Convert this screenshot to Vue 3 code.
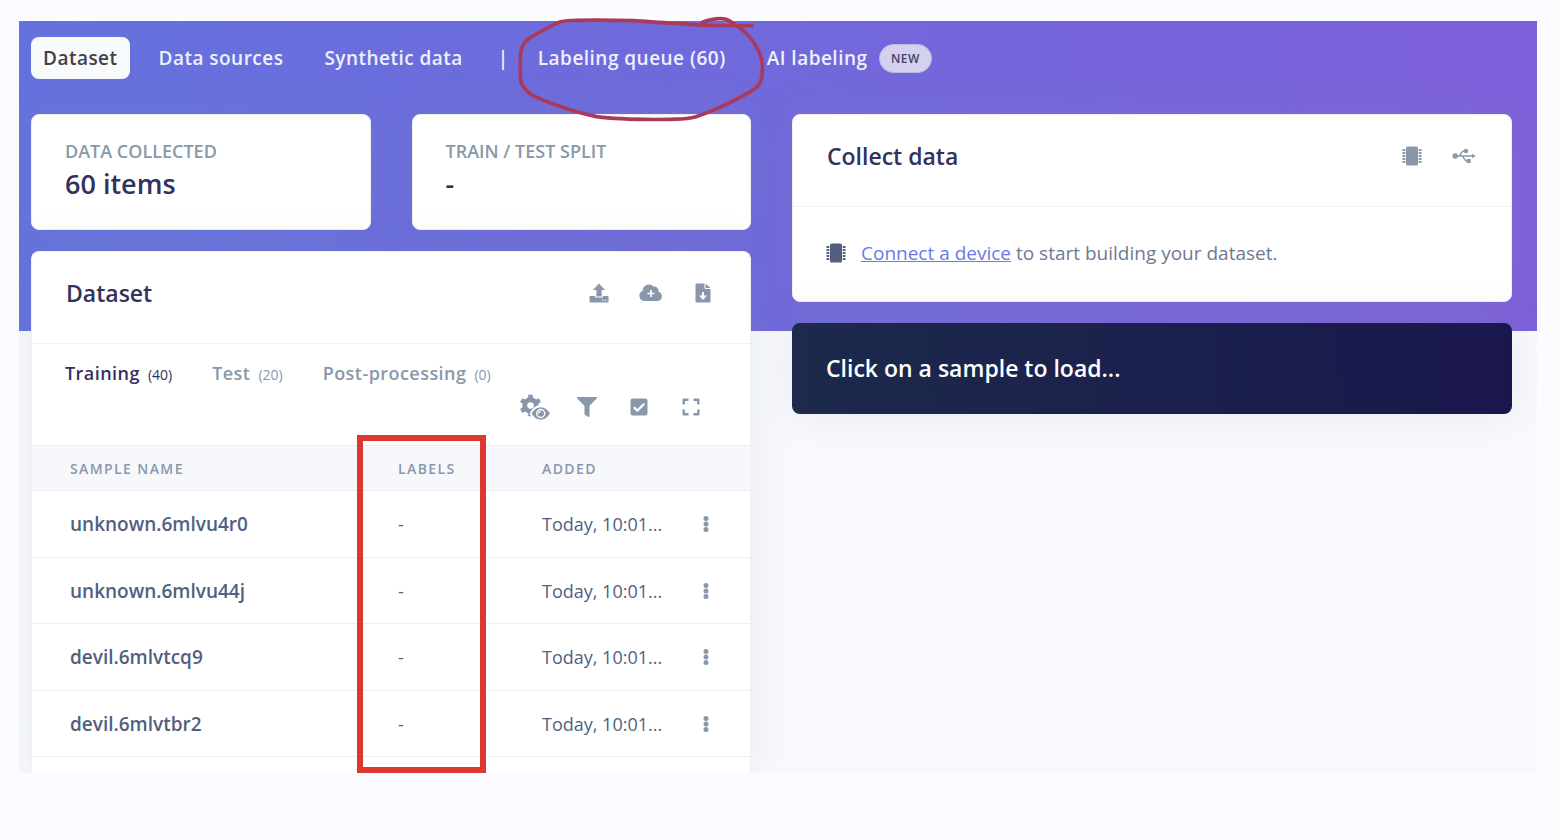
<script setup>
const samples = [
  { name: 'unknown.6mlvu4r0', label: '-', added: 'Today, 10:01...' },
  { name: 'unknown.6mlvu44j', label: '-', added: 'Today, 10:01...' },
  { name: 'devil.6mlvtcq9', label: '-', added: 'Today, 10:01...' },
  { name: 'devil.6mlvtbr2', label: '-', added: 'Today, 10:01...' }
]
const splits = [
  { name: 'Training', count: 40, active: true },
  { name: 'Test', count: 20, active: false },
  { name: 'Post-processing', count: 0, active: false }
]
const pins = [4, 7, 10, 13, 16]
</script>

<template>
  <div class="page">
    <main class="frame">
      <nav class="nav">
        <a href="#" class="nav-link current">Dataset</a>
        <a href="#" class="nav-link">Data sources</a>
        <a href="#" class="nav-link">Synthetic data</a>
        <span class="separator">|</span>
        <div class="marked">
          <a href="#" class="nav-link">Labeling queue (60)</a>
          <svg class="scribble" viewBox="45 45 750 330" fill="none" stroke="#aa3a5c" stroke-width="11" stroke-linecap="round" stroke-linejoin="round" aria-hidden="true">
            <path d="M607 67C635 57 662 54 678 58C690 62 697 69 706 75C742 95 762 125 776 153C789 183 788 202 787 222C785 247 774 260 762 268C722 293 650 330 588 350C560 358 540 357 512 358C450 359 350 358 290 350C230 338 140 308 100 287C72 272 60 248 61 230V172C62 143 70 128 84 118C110 99 150 80 176 67C190 61 205 62 230 61C290 60 360 61 400 62C460 66 520 71 570 73C620 77 680 78 757 77" />
          </svg>
        </div>
        <a href="#" class="nav-link">AI labeling <span class="badge">NEW</span></a>
      </nav>

      <div class="columns">
        <div class="column">
          <div class="stats">
            <section class="card stat">
              <h2 class="stat-label">DATA COLLECTED</h2>
              <p class="stat-value">60 items</p>
            </section>
            <section class="card stat">
              <h2 class="stat-label">TRAIN / TEST SPLIT</h2>
              <p class="stat-value">-</p>
            </section>
          </div>

          <section class="card dataset">
            <header class="card-header">
              <h2 class="card-title">Dataset</h2>
              <div class="actions">
                <button class="icon-button" aria-label="Upload data">
                  <svg width="20" height="20" viewBox="0 0 20 20" fill="currentColor">
                    <path d="M10 .5 16 7H12.6V13.5H7.4V7H4Z" />
                    <path fill-rule="evenodd" d="M1.2 13H6.2V14.5H13.8V13H18.8Q19.5 13 19.5 13.8V18.7Q19.5 19.5 18.8 19.5H1.2Q.5 19.5.5 18.7V13.8Q.5 13 1.2 13ZM13.2 16.7H14.5V17.8H13.2ZM16 16.7H17.3V17.8H16Z" />
                  </svg>
                </button>
                <button class="icon-button" aria-label="Import from cloud">
                  <svg width="24" height="20" viewBox="0 0 24 20">
                    <path fill="currentColor" d="M5.6 18A5.2 5.2 0 0 1 3.6 8A6.3 6.3 0 0 1 14.7 3.7A4 4 0 0 1 19.3 8.8A4.7 4.7 0 0 1 18.8 18Z" />
                    <path d="M12 7V14M8.5 10.5H15.500" stroke="#fff" stroke-width="1.7" />
                  </svg>
                </button>
                <button class="icon-button" aria-label="Export data">
                  <svg width="16" height="20" viewBox="0 0 16 20">
                    <path fill="currentColor" d="M1.500.5H9.500V5Q9.500 6 10.500 6H15.500V18.500Q15.500 19.500 14.500 19.500H1.500Q.5 19.500.5 18.500V1.500Q.5.5 1.500.5ZM10.600.5 15.500 5H10.600Z" />
                    <path fill="#fff" d="M7 9H9V12.500H12L8 17 4 12.500H7Z" />
                  </svg>
                </button>
              </div>
            </header>

            <div class="toolbar">
              <div class="splits">
                <button v-for="s in splits" :key="s.name" class="split" :class="{ active: s.active }">
                  {{ s.name }}<span class="count">({{ s.count }})</span>
                </button>
              </div>
              <div class="tools">
                <button class="icon-button" aria-label="Column visibility">
                  <svg width="30" height="28" viewBox="0 0 30 28">
                    <g fill="none" stroke="currentColor">
                      <circle cx="10.500" cy="12.500" r="5.800" stroke-width="5" />
                      <path d="M10.500 5V1.700M10.500 20V23.300M4 8.800 1.200 7.100M17 16.300 19.800 17.900M4 16.300 1.200 17.900M17 8.800 19.800 7.100" stroke-width="4.600" />
                    </g>
                    <path fill="#fff" d="M9.500 20.500Q14 12 20.500 12Q27 12 32 20.500Q27 29 20.500 29Q14 29 9.500 20.500Z" />
                    <path fill="currentColor" d="M11.500 20.500Q15.500 14.300 20.700 14.300Q26 14.300 30 20.500Q26 26.700 20.700 26.700Q15.500 26.700 11.500 20.500Z" />
                    <circle cx="20.700" cy="20.500" r="4" fill="none" stroke="#fff" stroke-width="1.400" />
                    <path d="M18.500 20.500A2.300 2.300 0 0 1 20.700 18.300" fill="none" stroke="#fff" stroke-width="1.300" />
                  </svg>
                </button>
                <button class="icon-button" aria-label="Filter samples">
                  <svg width="20" height="20" viewBox="0 0 512 512" fill="currentColor">
                    <path d="M487.976 0H24.028C2.710 0-8.047 25.866 7.058 40.971L192 225.941V432c0 7.831 3.821 15.170 10.237 19.662l80 55.980C298.020 518.690 320 507.493 320 487.980V225.941l184.947-184.970C520.021 25.896 509.338 0 487.976 0z" />
                  </svg>
                </button>
                <button class="icon-button" aria-label="Select multiple">
                  <svg width="18" height="18" viewBox="0 0 18 18">
                    <rect x=".5" y=".5" width="17" height="17" rx="2" fill="currentColor" />
                    <path d="M3.800 9.200 7.300 12.600 14.200 5.700" fill="none" stroke="#fff" stroke-width="2.200" />
                  </svg>
                </button>
                <button class="icon-button" aria-label="Expand view">
                  <svg width="18" height="18" viewBox="0 0 18 18" fill="none" stroke="currentColor" stroke-width="2.400" stroke-linejoin="round">
                    <path d="M1.700 6.500V1.700H6.500M11.500 1.700H16.300V6.500M16.300 11.500V16.300H11.500M6.500 16.300H1.700V11.500" />
                  </svg>
                </button>
              </div>
            </div>

            <div class="table-area">
              <table class="samples">
                <colgroup>
                  <col class="col-name">
                  <col class="col-label">
                  <col>
                  <col class="col-menu">
                </colgroup>
                <thead>
                  <tr>
                    <th scope="col">SAMPLE NAME</th>
                    <th scope="col">LABELS</th>
                    <th scope="col">ADDED</th>
                    <td></td>
                  </tr>
                </thead>
                <tbody>
                  <tr v-for="s in samples" :key="s.name">
                    <th scope="row">{{ s.name }}</th>
                    <td>{{ s.label }}</td>
                    <td>{{ s.added }}</td>
                    <td class="menu-cell">
                      <button class="icon-button" :aria-label="'Options for ' + s.name">
                        <svg width="6" height="18" viewBox="0 0 6 18" fill="currentColor">
                          <circle cx="3" cy="3.500" r="2.500" />
                          <circle cx="3" cy="9" r="2.500" />
                          <circle cx="3" cy="14.500" r="2.500" />
                        </svg>
                      </button>
                    </td>
                  </tr>
                </tbody>
              </table>
              <div class="highlight"></div>
            </div>
          </section>
        </div>

        <div class="column">
          <section class="card">
            <header class="card-header">
              <h2 class="card-title">Collect data</h2>
              <div class="actions">
                <button class="icon-button" aria-label="Connect a device">
                  <svg width="20" height="20" viewBox="0 0 20 20" fill="currentColor">
                    <rect x="4" y=".5" width="12" height="19" rx="1.500" />
                    <path v-for="y in pins" :key="y" :d="`M.5 ${y - 1}H3.300V${y + 1}H.5ZM16.700 ${y - 1}H19.500V${y + 1}H16.700Z`" />
                  </svg>
                </button>
                <button class="icon-button" aria-label="Connect using USB">
                  <svg width="24" height="16" viewBox="0 0 24 16" fill="none" stroke="currentColor" stroke-width="1.400">
                    <path d="M3 8H21M6.500 8C9.500 8 8.500 3 12 3H14M9.500 8C12.500 8 11.500 13 15 13H16" />
                    <circle cx="3.200" cy="8" r="2.700" fill="currentColor" stroke="none" />
                    <circle cx="14" cy="3" r="2.200" fill="currentColor" stroke="none" />
                    <path d="M14.700 11H18.700V15H14.700ZM20 5.700 23.800 8 20 10.300Z" fill="currentColor" stroke="none" />
                  </svg>
                </button>
              </div>
            </header>
            <p class="connect">
              <svg class="chip" width="20" height="20" viewBox="0 0 20 20" fill="currentColor" aria-hidden="true">
                <rect x="4" y=".5" width="12" height="19" rx="1.500" />
                <path v-for="y in pins" :key="y" :d="`M.5 ${y - 1}H3.300V${y + 1}H.5ZM16.700 ${y - 1}H19.500V${y + 1}H16.700Z`" />
              </svg>
              <span><a href="#" class="link">Connect a device</a> to start building your dataset.</span>
            </p>
          </section>

          <section class="card preview">
            <h2 class="preview-title">Click on a sample to load...</h2>
          </section>
        </div>
      </div>
    </main>
  </div>
</template>

<style>
body {
  background: #fbfcff;
}
</style>

<style scoped>
* {
  box-sizing: border-box;
}

.page {
  padding: 21px 23px 64px 19px;
  font-family: "Open Sans", sans-serif;
  font-size: 18px;
  color: #525f7f;
}

h2,
p {
  margin: 0;
}

button {
  padding: 0;
  border: 0;
  background: none;
  font: inherit;
  color: inherit;
}

.frame {
  padding: 16px 25px 0 12px;
  background: linear-gradient(87deg, #6472dd, #7e60da) no-repeat 0 0 / 100% 310px, #f8f9fe;
  clip-path: inset(-20px 0 0 0);
}

.nav {
  display: flex;
  align-items: center;
  gap: 17px;
  height: 42px;
  margin-bottom: 35px;
}

.nav-link,
.separator {
  font-size: 19px;
  font-weight: 600;
  line-height: 42px;
  letter-spacing: 0.025em;
  white-space: nowrap;
  color: #f0f0fc;
}

.nav-link {
  display: block;
  padding: 0 12px;
  border-radius: 8px;
  text-decoration: none;
}

.nav-link.current {
  background: #f9fafc;
  color: #3f4248;
}

.separator {
  margin-left: 6px;
}

.badge {
  display: inline-block;
  margin-left: 6px;
  padding: 0 11px;
  border: 1px solid #bdbce2;
  border-radius: 15px;
  background: #d4d0ee;
  font-size: 12px;
  line-height: 27px;
  vertical-align: 2px;
  color: #3c4564;
}

.marked {
  position: relative;
}

.scribble {
  position: absolute;
  top: -22px;
  left: -11px;
  width: 250px;
  height: 110px;
  pointer-events: none;
}

.columns {
  display: grid;
  grid-template-columns: 1fr 1fr;
  gap: 41px;
}

.column {
  display: flex;
  flex-direction: column;
  gap: 21px;
  min-width: 0;
}

.card {
  border: 1px solid #eeeff8;
  border-radius: 8px;
  background: #fff;
  box-shadow: 0 0 41px rgba(136, 152, 170, 0.15);
}

.stats {
  display: grid;
  grid-template-columns: 1fr 1fr;
  gap: 41px;
}

.stat {
  padding: 23px 33px 25px;
}

.stat-label {
  font-size: 18px;
  font-weight: 600;
  line-height: 26px;
  color: #8898aa;
}

.stat-value {
  font-size: 27px;
  font-weight: 600;
  line-height: 40px;
  color: #32325d;
}

.card-header {
  display: flex;
  align-items: center;
  justify-content: space-between;
  height: 92px;
  padding: 0 21px 10px 34px;
  border-bottom: 1px solid #f0f1f4;
}

.card-title {
  font-size: 23px;
  font-weight: 600;
  line-height: 36px;
  color: #32325d;
}

.actions,
.tools {
  display: flex;
  color: #8898aa;
}

.icon-button {
  display: flex;
  align-items: center;
  justify-content: center;
  width: 52px;
  height: 32px;
}

.dataset {
  border-bottom: 0;
  border-radius: 8px 8px 0 0;
}

.toolbar {
  padding: 13px 33px 22px;
}

.tools {
  justify-content: flex-end;
}

.splits {
  display: flex;
  gap: 40px;
}

.split {
  height: 34px;
  font-size: 18px;
  font-weight: 600;
  line-height: 32px;
  letter-spacing: 0.025em;
  white-space: nowrap;
  color: #8898aa;
}

.split.active {
  color: #32325d;
}

.count {
  margin-left: 8px;
  font-size: 14px;
  font-weight: 400;
  letter-spacing: 0;
}

.table-area {
  position: relative;
  padding-bottom: 16px;
}

.samples {
  width: 100%;
  table-layout: fixed;
  border-collapse: separate;
  border-spacing: 0;
}

.col-name {
  width: 328px;
}

.col-label {
  width: 144px;
}

.col-menu {
  width: 70px;
}

.samples th,
.samples td {
  padding: 0 0 0 38px;
  border-bottom: 1px solid #eceef1;
  text-align: left;
  white-space: nowrap;
}

.samples thead th,
.samples thead td {
  height: 46px;
  border-top: 1px solid #eceef1;
  background: #f7f8fc;
  font-size: 14px;
  font-weight: 600;
  letter-spacing: 0.1em;
  color: #8898aa;
}

.samples tbody tr {
  height: 66px;
}

.samples tbody tr:nth-child(odd) {
  height: 67px;
}

.samples tbody th {
  font-size: 19px;
  font-weight: 600;
}

.samples tbody td {
  font-size: 18px;
}

.samples tbody .menu-cell {
  padding: 0;
  color: #8898aa;
}

.highlight {
  position: absolute;
  top: -10px;
  bottom: 0;
  left: 325px;
  width: 129px;
  border: 6px solid #dc3832;
  pointer-events: none;
}

.connect {
  display: flex;
  align-items: center;
  gap: 15px;
  padding: 31px 33px 33px;
  font-size: 19px;
  line-height: 30px;
  color: #6f7993;
}

.chip {
  flex: none;
  color: #525f7f;
}

.link {
  color: #6c78e8;
  text-decoration: underline;
}

.preview {
  padding: 28px 34px 29px;
  border: 0;
  background: linear-gradient(87deg, #1c2a4b, #1a174d);
}

.preview-title {
  font-size: 23px;
  font-weight: 600;
  line-height: 34px;
  color: #fff;
}
</style>
